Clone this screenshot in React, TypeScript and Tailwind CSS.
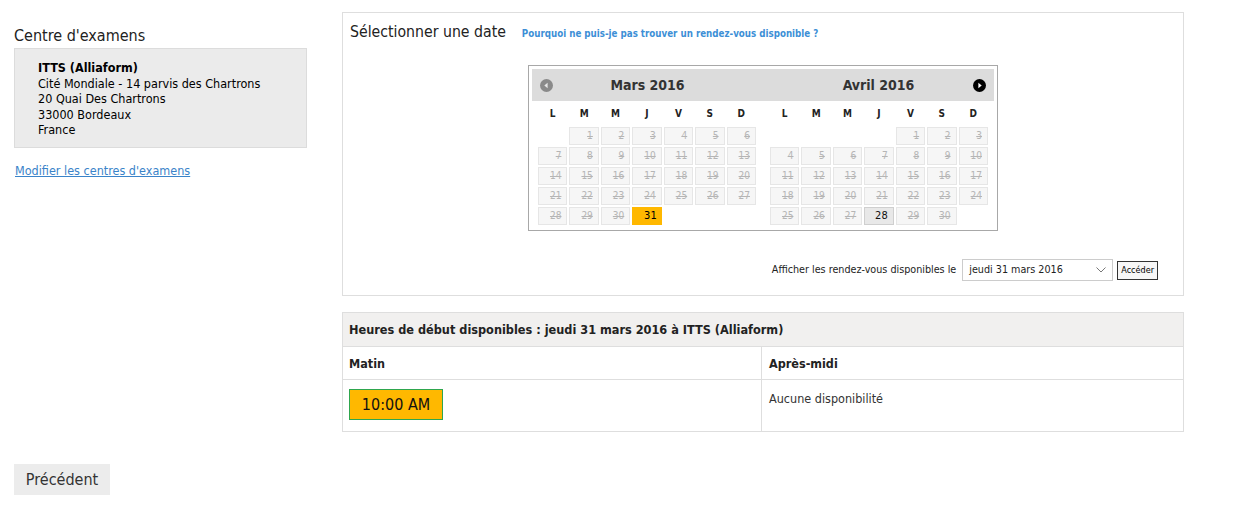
import React from 'react';

type Month = {
  name: string;
  offset: number;
  days: number;
  selected?: number;
  available?: number;
};

const months: Month[] = [
  { name: 'Mars 2016', offset: 1, days: 31, selected: 31 },
  { name: 'Avril 2016', offset: 4, days: 30, available: 28 },
];

const weekDays = ['L', 'M', 'M', 'J', 'V', 'S', 'D'];

const ArrowIcon: React.FC<{ dir: 'prev' | 'next' }> = ({ dir }) => (
  <svg width="13" height="13" viewBox="0 0 13 13">
    <circle cx="6.5" cy="6.5" r="6.5" fill={dir === 'prev' ? '#8a8a8a' : '#000'} />
    {dir === 'prev' ? (
      <path d="M4.3 6.5 L7.6 3.8 L7.6 9.2 Z" fill="#e6e6e6" />
    ) : (
      <path d="M8.7 6.5 L5.4 3.8 L5.4 9.2 Z" fill="#fff" />
    )}
  </svg>
);

const MonthView: React.FC<{ month: Month; first: boolean }> = ({ month, first }) => {
  const cells: (number | null)[] = [];
  for (let i = 0; i < month.offset; i++) cells.push(null);
  for (let d = 1; d <= month.days; d++) cells.push(d);

  return (
    <div className="w-[231px]">
      <div className="flex h-[32px] items-center bg-[#dcdcdc] px-[8px]">
        <div className="w-[13px]">{first && <ArrowIcon dir="prev" />}</div>
        <div className="flex-1 text-center text-[14px] font-bold text-[#333]">{month.name}</div>
        <div className="w-[13px]">{!first && <ArrowIcon dir="next" />}</div>
      </div>
      <div className={first ? 'pl-[6px]' : 'pl-[7px]'}>
        <div className="grid w-[218px] grid-cols-7 gap-x-[2px]">
          {weekDays.map((d, i) => (
            <div key={i} className="h-[26px] pt-[6px] text-center text-[10px] font-bold leading-[14px] text-[#222]">
              {d}
            </div>
          ))}
        </div>
        <div className="grid w-[218px] grid-cols-7 gap-[2px]">
          {cells.map((d, i) => {
            if (d === null) return <div key={i} className="h-[18px]" />;
            if (d === month.selected)
              return (
                <div key={i} className="h-[18px] bg-[#ffb800] pr-[5px] text-right text-[11px] leading-[18px] text-black">
                  {d}
                </div>
              );
            if (d === month.available)
              return (
                <div key={i} className="h-[18px] border border-[#cfcfcf] bg-[#e8e8e8] pr-[5px] text-right text-[11px] leading-[16px] text-[#111]">
                  {d}
                </div>
              );
            return (
              <div
                key={i}
                className="h-[18px] border border-[#e6e6e6] bg-[#f6f6f6] pr-[5px] text-right text-[10px] leading-[16px] text-[#b5b5b5] line-through"
              >
                {d}
              </div>
            );
          })}
        </div>
      </div>
    </div>
  );
};

const App: React.FC = () => {
  return (
    <div className="min-h-screen bg-white text-[12.5px] text-black font-['DejaVu_Sans_Condensed','DejaVu_Sans',sans-serif]">
      <div className="flex pl-[14px] pt-[12px]">
        {/* Left column */}
        <div className="w-[293px]">
          <h2 className="mt-[14px] text-[16px] leading-[20px] text-[#222]">Centre d'examens</h2>
          <div className="mt-[2px] border border-[#dcdcdc] bg-[#ebebeb] pb-[9px] pl-[23px] pt-[11px] leading-[15.5px]">
            <div className="font-bold">ITTS (Alliaform)</div>
            <div>Cité Mondiale - 14 parvis des Chartrons</div>
            <div>20 Quai Des Chartrons</div>
            <div>33000 Bordeaux</div>
            <div>France</div>
          </div>
          <a href="#" className="ml-[1px] mt-[15px] inline-block leading-[16px] text-[#3a83c9] underline">
            Modifier les centres d'examens
          </a>
        </div>

        {/* Right column */}
        <div className="ml-[35px] w-[842px]">
          <div className="border border-[#dedede] pb-[14px] pl-[7px] pr-[25px] pt-[9px]">
            <div className="flex items-baseline">
              <h2 className="text-[15.7px] leading-[20px] text-[#222]">Sélectionner une date</h2>
              <a href="#" className="ml-[16px] text-[9.7px] font-bold text-[#3d8fd6]">
                Pourquoi ne puis-je pas trouver un rendez-vous disponible ?
              </a>
            </div>
            <div className="mt-[23px] flex justify-center pl-[18px]">
              <div className="flex h-[166px] border border-[#a8a8a8] p-[3px]">
                {months.map((m, i) => (
                  <MonthView key={m.name} month={m} first={i === 0} />
                ))}
              </div>
            </div>
            <div className="mt-[28px] flex items-center justify-end">
              <span className="text-[10.7px] text-[#222]">Afficher les rendez-vous disponibles le</span>
              <div className="ml-[6px] flex h-[22px] w-[151px] items-center justify-between border border-[#cccccc] bg-white pl-[6px] pr-[6px] text-[10.7px] text-[#222]">
                <span>jeudi 31 mars 2016</span>
                <svg width="10" height="6" viewBox="0 0 10 6">
                  <path d="M0.5 0.5 L5 5 L9.5 0.5" fill="none" stroke="#777" strokeWidth="1" />
                </svg>
              </div>
              <button className="ml-[4px] h-[19px] border border-[#333] bg-[#f7f7f7] px-[3px] text-[9px] leading-[17px] text-black">
                Accéder
              </button>
            </div>
          </div>

          <div className="mt-[16px] border border-[#dedede]">
            <div className="h-[34px] border-b border-[#dedede] bg-[#f1f0ef] pl-[6px] text-[12.6px] font-bold leading-[34px] text-[#222]">
              Heures de début disponibles : jeudi 31 mars 2016 à ITTS (Alliaform)
            </div>
            <div className="grid grid-cols-[419px_1fr]">
              <div className="h-[33px] border-b border-r border-[#dedede] pl-[6px] font-bold leading-[33px] text-[#222]">Matin</div>
              <div className="h-[33px] border-b border-[#dedede] pl-[7px] font-bold leading-[33px] text-[#222]">Après-midi</div>
              <div className="h-[51px] border-r border-[#dedede] pl-[6px] pt-[9px]">
                <button className="h-[31px] w-[94px] border border-[#2ea64e] bg-[#ffb800] text-[16px] text-[#111]">
                  10:00 AM
                </button>
              </div>
              <div className="h-[51px] pl-[7px] pt-[10px] text-[#333]">Aucune disponibilité</div>
            </div>
          </div>
        </div>
      </div>

      <div className="pl-[14px] pt-[32px]">
        <button className="h-[31px] w-[96px] bg-[#ececec] text-[16px] text-[#333]">Précédent</button>
      </div>
    </div>
  );
};

export default App;
